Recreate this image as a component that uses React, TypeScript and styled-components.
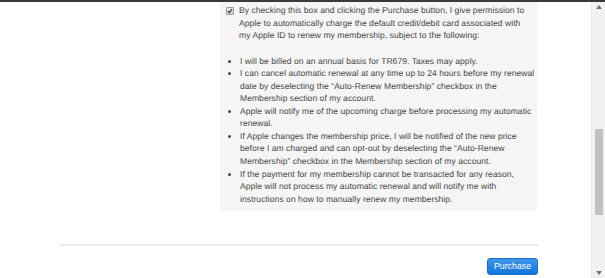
import React from "react";
import styled, { createGlobalStyle } from "styled-components";

const Global = createGlobalStyle`
  html, body { margin: 0; padding: 0; background: #fff; }
  body {
    font-family: "Liberation Sans", Arial, sans-serif;
    text-rendering: geometricPrecision;
  }
`;

const Window = styled.div`
  width: 605px;
  height: 278px;
  display: flex;
  flex-direction: column;
  overflow: hidden;
`;

const TopEdge = styled.div`
  height: 2px;
  background: #3a3a3a;
  flex: none;
`;

const Body = styled.div`
  flex: 1;
  display: flex;
  min-height: 0;
`;

const Content = styled.div`
  flex: 1;
  display: flex;
  flex-direction: column;
  padding-left: 60px;
`;

const Column = styled.div`
  width: 478px;
  display: flex;
  flex-direction: column;
`;

const Panel = styled.div`
  margin-left: 160px;
  width: 317px;
  box-sizing: border-box;
  background: #f5f5f5;
  border-radius: 0 0 4px 4px;
  padding: 2px 0 6px 6px;
  color: #474747;
  font-size: 8.55px;
  line-height: 12.55px;
  letter-spacing: 0.04px;
`;

const ConsentRow = styled.div`
  display: flex;
  gap: 5px;
  padding-right: 10px;
`;

const Check = styled.span`
  flex: none;
  width: 8px;
  height: 8px;
  margin-top: 3px;
  box-sizing: border-box;
  border: 1px solid #9a9a9a;
  border-radius: 1px;
  background: linear-gradient(#e4e4e4, #cfcfcf);
  display: flex;
  align-items: center;
  justify-content: center;
`;

const ConsentText = styled.p`
  margin: 0;
`;

const Terms = styled.ul`
  margin: 13px 0 0;
  padding-left: 14px;
  list-style: disc;
`;

const Term = styled.li`
  padding-left: 0;
`;

const Divider = styled.div`
  margin-top: 33px;
  height: 2px;
  background: #ececec;
`;

const Actions = styled.div`
  display: flex;
  justify-content: flex-end;
  padding-top: 12px;
`;

const Button = styled.button`
  width: 51px;
  height: 17px;
  padding: 0;
  border: 1px solid #1a6fc9;
  border-radius: 3px;
  background: linear-gradient(#3d95ea, #1076dc);
  color: #fff;
  font-family: "Liberation Sans", Arial, sans-serif;
  font-size: 8.8px;
  line-height: 15px;
`;

const Scrollbar = styled.div`
  width: 13px;
  flex: none;
  background: #f1f1f1;
  border-left: 1px solid #e8e8e8;
  display: flex;
  flex-direction: column;
  align-items: center;
`;

const Arrow = styled.div`
  height: 10px;
  display: flex;
  align-items: center;
  justify-content: center;
  flex: none;
`;

const Track = styled.div`
  flex: 1;
  width: 100%;
  display: flex;
  flex-direction: column;
  align-items: center;
  padding-top: 117px;
`;

const Thumb = styled.div`
  width: 8px;
  height: 86px;
  background: #c1c1c1;
`;

const terms = [
  "I will be billed on an annual basis for TR679. Taxes may apply.",
  "I can cancel automatic renewal at any time up to 24 hours before my renewal date by deselecting the \u201cAuto-Renew Membership\u201d checkbox in the Membership section of my account.",
  "Apple will notify me of the upcoming charge before processing my automatic renewal.",
  "If Apple changes the membership price, I will be notified of the new price before I am charged and can opt-out by deselecting the \u201cAuto-Renew Membership\u201d checkbox in the Membership section of my account.",
  "If the payment for my membership cannot be transacted for any reason, Apple will not process my automatic renewal and will notify me with instructions on how to manually renew my membership.",
];

export default function App() {
  return (
    <>
      <Global />
      <Window>
        <TopEdge />
        <Body>
          <Content>
            <Column>
              <Panel>
                <ConsentRow>
                  <Check>
                    <svg width="6" height="6" viewBox="0 0 6 6">
                      <path d="M1 3.2 L2.5 4.6 L5 1.2" stroke="#333" strokeWidth="1.1" fill="none" />
                    </svg>
                  </Check>
                  <ConsentText>
                    By checking this box and clicking the Purchase button, I give permission to Apple to automatically charge the default credit/debit card associated with my Apple ID to renew my membership, subject to the following:
                  </ConsentText>
                </ConsentRow>
                <Terms>
                  {terms.map((t) => (
                    <Term key={t}>{t}</Term>
                  ))}
                </Terms>
              </Panel>
              <Divider />
              <Actions>
                <Button>Purchase</Button>
              </Actions>
            </Column>
          </Content>
          <Scrollbar>
            <Arrow>
              <svg width="6" height="4" viewBox="0 0 6 4">
                <path d="M0 4 L3 0 L6 4 Z" fill="#777" />
              </svg>
            </Arrow>
            <Track>
              <Thumb />
            </Track>
            <Arrow>
              <svg width="6" height="4" viewBox="0 0 6 4">
                <path d="M0 0 L3 4 L6 0 Z" fill="#777" />
              </svg>
            </Arrow>
          </Scrollbar>
        </Body>
      </Window>
    </>
  );
}
